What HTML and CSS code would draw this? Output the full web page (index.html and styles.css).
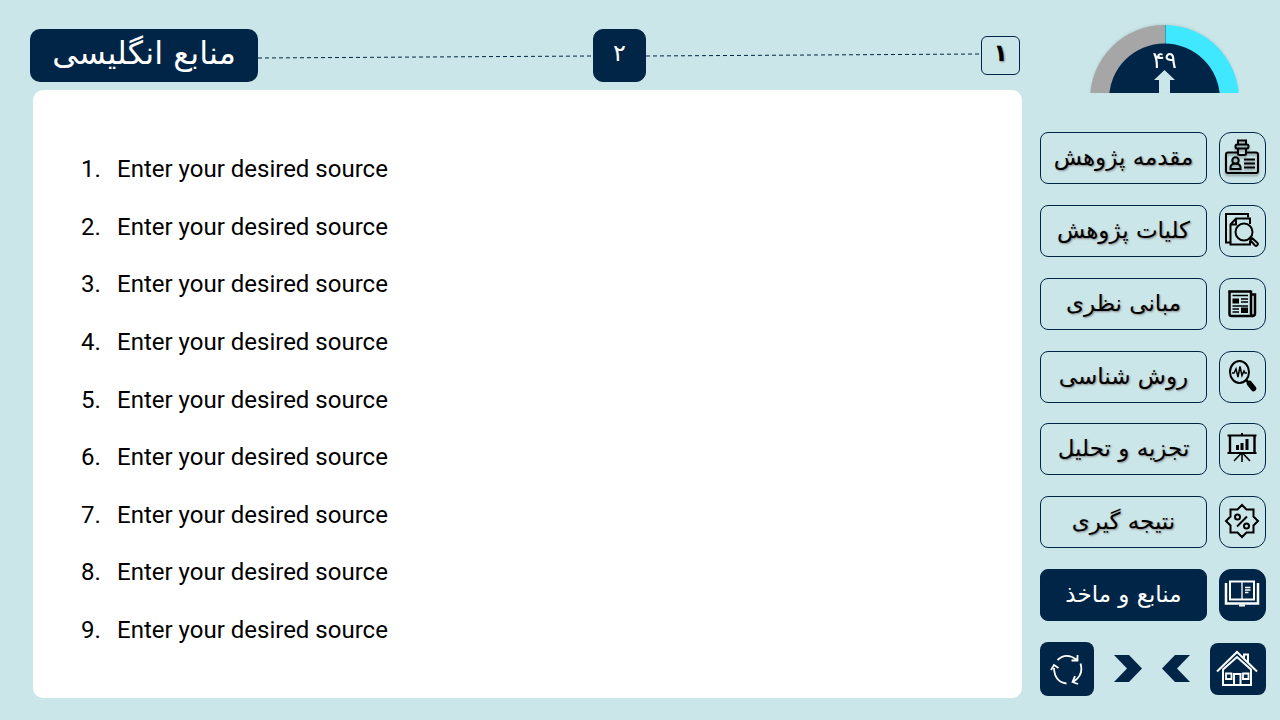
FILE: index.html
```
<!DOCTYPE html>
<html lang="fa">
<head>
    <meta charset="UTF-8">
    <meta name="viewport" content="width=device-width, initial-scale=1">
    <title>منابع و ماخذ</title>
    <link rel="stylesheet" href="styles.css">
</head>
<body>
    <main class="content">
        <header class="steps">
            <h1 class="title" dir="rtl">منابع انگلیسی</h1>
            <svg class="step-line" viewBox="0 0 335 8" preserveAspectRatio="none" aria-hidden="true">
                <path d="M0 6 L335 4"/>
            </svg>
            <button type="button" class="step step-active">۲</button>
            <svg class="step-line" viewBox="0 0 335 8" preserveAspectRatio="none" aria-hidden="true">
                <path d="M0 4 L335 2"/>
            </svg>
            <button type="button" class="step">۱</button>
        </header>

        <section class="card">
            <ol class="sources" lang="en">
                <li>Enter your desired source</li>
                <li>Enter your desired source</li>
                <li>Enter your desired source</li>
                <li>Enter your desired source</li>
                <li>Enter your desired source</li>
                <li>Enter your desired source</li>
                <li>Enter your desired source</li>
                <li>Enter your desired source</li>
                <li>Enter your desired source</li>
            </ol>
        </section>
    </main>

    <aside class="sidebar">
        <div class="gauge">
            <svg width="149" height="69" viewBox="0 0 149 69" aria-hidden="true">
                <path d="M0 75 A74.5 74.5 0 0 1 75 1 V75 Z" fill="#a6a6a6"/>
                <path d="M75 1 A74.5 74.5 0 0 1 149 75 H75 Z" fill="#40e8ff"/>
                <path d="M75.5 1 V20" stroke="#2aa5b8" stroke-width="1"/>
                <circle cx="74.5" cy="75" r="55.5" fill="#002546"/>
                <path d="M74.5 46 L85 56 H80 V69 H69 V56 H64 Z" fill="#cbe6e9"/>
            </svg>
            <span class="gauge-value">۴۹</span>
        </div>

        <nav class="menu">
            <a href="#intro" class="menu-item">
                <span class="menu-label" dir="rtl">مقدمه پژوهش</span>
                <span class="menu-icon">
                    <svg class="icon-shadow" width="36" height="36" viewBox="0 0 36 36" fill="none" stroke="#000" stroke-width="2">
                        <path d="M13 13.5 H4 Q2 13.5 2 15.5 V32 Q2 34 4 34 H32 Q34 34 34 32 V15.5 Q34 13.5 32 13.5 H23"/>
                        <path d="M14 1.5 H22 V5.5 H14 Z M13 5.5 H23 Q24.5 5.5 24.5 7.5 Q24.5 9.5 23 9.5 H13 Q11.5 9.5 11.5 7.5 Q11.5 5.5 13 5.5 Z M14 9.5 V14.5 Q14 16 15.5 16 H20.5 Q22 16 22 14.5 V9.5"/>
                        <circle cx="11.5" cy="21.5" r="3.2"/>
                        <path d="M6.5 30 V28 Q7 25.5 10 24.5 H13 Q16 25.5 16.5 28 V30 Z"/>
                        <path d="M20 20.5 H31 M20 24.5 H31 M20 28.5 H31"/>
                    </svg>
                </span>
            </a>
            <a href="#overview" class="menu-item">
                <span class="menu-label" dir="rtl">کلیات پژوهش</span>
                <span class="menu-icon">
                    <svg width="36" height="36" viewBox="0 0 36 36" fill="none" stroke="#000" stroke-width="2">
                        <path d="M6 30.5 H2 V2 H24 V5.5"/>
                        <path d="M26 12 V6.5 H12 L6.5 12.5 V32.500 H26 V29"/>
                        <path d="M12 6.5 V12.5 H6.5"/>
                        <circle cx="20" cy="20" r="8.5"/>
                        <path d="M25 27 L27 25 M26.5 28.5 L31 33.5 Q32.5 34.5 33.5 33 Q34.5 32 33.5 31 L28.5 26.5 Z"/>
                    </svg>
                </span>
            </a>
            <a href="#theory" class="menu-item">
                <span class="menu-label" dir="rtl">مبانی نظری</span>
                <span class="menu-icon">
                    <svg width="36" height="36" viewBox="0 0 36 36" fill="none" stroke="#000" stroke-width="2">
                        <path d="M27 6.5 H5.5 V29 Q5.500 31 7.5 31 H28 Q31 31 31 28.5 V9.5 H27.5" stroke-width="2.5"/>
                        <path d="M27 5.5 V29 Q27 31 29 31" stroke-width="2.5"/>
                        <path d="M8.5 10.5 H24 M17 14 H24 M17 17 H24 M8.5 21 H24 M8.5 24 H15 M8.5 27 H15" stroke-width="1.3"/>
                        <path d="M8.5 13.5 H15 V18.5 H8.5 Z M17 22.500 H24 V28 H17 Z" fill="#000" stroke="none"/>
                    </svg>
                </span>
            </a>
            <a href="#method" class="menu-item">
                <span class="menu-label" dir="rtl">روش شناسی</span>
                <span class="menu-icon">
                    <svg width="36" height="36" viewBox="0 0 36 36" fill="none" stroke="#000" stroke-width="2">
                        <ellipse cx="15.5" cy="14" rx="9.5" ry="11"/>
                        <path d="M8 15 H10 L12 11 L14 19 L16 8.5 L18 17.5 L20 13 L21 15 H23" stroke-width="1.5"/>
                        <path d="M22 22 L25 25" stroke-width="2.5"/>
                        <path d="M25.5 25.5 L29.5 30.5" stroke-width="5.5" stroke-linecap="round"/>
                    </svg>
                </span>
            </a>
            <a href="#analysis" class="menu-item">
                <span class="menu-label" dir="rtl">تجزیه و تحلیل</span>
                <span class="menu-icon">
                    <svg width="36" height="36" viewBox="0 0 36 36" fill="none" stroke="#000" stroke-width="2">
                        <path d="M3.5 5.5 H32.5 M3.5 23 H32.5 M18 3 V5" stroke-width="2"/>
                        <path d="M6 6 V22.5 M30.5 6 V22.5" stroke-width="2.4"/>
                        <path d="M12 15 H15 V20 H12 Z M16.5 13 H19.5 V20 H16.5 Z M21.5 9 H24.5 V20 H21.5 Z" fill="#000" stroke="none"/>
                        <path d="M18 23 V32 M17 23.5 L10 31 M19 23.5 L26 31" stroke-width="1.6"/>
                    </svg>
                </span>
            </a>
            <a href="#results" class="menu-item">
                <span class="menu-label" dir="rtl">نتیجه گیری</span>
                <span class="menu-icon">
                    <svg width="36" height="36" viewBox="0 0 36 36" fill="none" stroke="#000" stroke-width="2">
                        <path d="M18 2 L22.5 6.5 H29.5 V13.5 L34 18 L29.5 22.5 V29.5 H22.5 L18 34 L13.5 29.5 H6.5 V22.5 L2 18 L6.5 13.5 V6.5 H13.5 Z"/>
                        <circle cx="13.5" cy="14" r="2.5"/>
                        <circle cx="22.5" cy="23" r="2.5"/>
                        <path d="M23 13.5 L13 23.5"/>
                    </svg>
                </span>
            </a>
            <a href="#sources" class="menu-item menu-item-active" aria-current="page">
                <span class="menu-label" dir="rtl">منابع و ماخذ</span>
                <span class="menu-icon">
                    <svg width="36" height="36" viewBox="0 0 36 36" fill="none" stroke="#fff" stroke-width="2">
                        <path d="M2 7 V27.5 H34 V7" stroke-width="2.5"/>
                        <path d="M6 5.5 H30 V23.5 H6 Z"/>
                        <path d="M18 5.5 V23.5 M21 11.5 H26.5 M21 14 H26.5 M21 16.5 H24.5" stroke-width="1.3"/>
                        <path d="M15 29.5 H21"/>
                    </svg>
                </span>
            </a>

            <div class="controls">
                <button type="button" class="control" aria-label="Reload">
                    <svg width="36" height="36" viewBox="0 0 36 36" fill="none" stroke="#fff" stroke-width="1.8">
                        <path d="M8.5 9 Q17 1 27.5 8.5 M22.5 9.5 H28.5 V4"/>
                        <path d="M31.5 12.5 Q35 24 24.5 30.5 M26 25 L23.5 31 L29 33"/>
                        <path d="M17.5 32.5 Q5.5 31 5 17 M2 19 L5 14 L9.5 17"/>
                    </svg>
                </button>
                <button type="button" class="arrow" aria-label="Next">
                    <svg width="28" height="27" viewBox="0 0 28 27"><path d="M0 0 H15 L28 13.5 L15 27 H0 L13 13.5 Z" fill="#002546"/></svg>
                </button>
                <button type="button" class="arrow" aria-label="Previous">
                    <svg width="28" height="27" viewBox="0 0 28 27"><path d="M28 0 H13 L0 13.5 L13 27 H28 L15 13.5 Z" fill="#002546"/></svg>
                </button>
                <button type="button" class="control control-home" aria-label="Home">
                    <svg width="44" height="38" viewBox="0 0 44 38" fill="none" stroke="#fff" stroke-width="2">
                        <path d="M1 21.500 L21 2 L41 21.5"/>
                        <path d="M7 19.5 V35 H35 V19.5 L21 7 Z"/>
                        <path d="M28 8 V4.5 H32 V13"/>
                        <path d="M18 35 V24 H24.5 V35"/>
                        <path d="M10 23.5 H15.5 V29 H10 Z M27 23.5 H32.5 V29 H27 Z" stroke-width="1.8"/>
                    </svg>
                </button>
            </div>
        </nav>
    </aside>
</body>
</html>
```
FILE: styles.css
```
* {
    box-sizing: border-box;
}
body {
    margin: 0;
    min-height: 100vh;
    display: flex;
    gap: 18px;
    padding: 24px 14px 22px 30px;
    background-color: #cbe6e9;
    color: #000;
    font-family: "DejaVu Sans", sans-serif;
}
button {
    padding: 0;
    border: none;
    background: none;
    color: inherit;
    font-family: inherit;
    cursor: pointer;
}
svg {
    display: block;
}

/* main column */
.content {
    flex: 1;
    min-width: 0;
    display: flex;
    flex-direction: column;
    gap: 8px;
    padding-top: 5px;
}
.steps {
    display: flex;
    align-items: center;
    padding-right: 2px;
}
.title {
    width: 228px;
    height: 53px;
    margin: 0;
    border-radius: 10px;
    background-color: #002546;
    color: #fff;
    font-size: 32px;
    font-weight: normal;
    line-height: 48px;
    text-align: center;
}
.step-line {
    flex: 1;
    min-width: 0;
    height: 8px;
    fill: none;
    stroke: #002546;
    stroke-width: 1;
    stroke-dasharray: 4 3;
}
.step {
    width: 39px;
    height: 39px;
    padding-bottom: 6px;
    border: 1px solid #002546;
    border-radius: 6px;
    font-size: 24px;
    font-weight: bold;
    line-height: 30px;
    text-shadow: 1px 1px 2px #888;
}
.step-active {
    width: 53px;
    height: 53px;
    border-radius: 10px;
    background-color: #002546;
    color: #fff;
    font-weight: normal;
    text-shadow: none;
}
.card {
    flex: 1;
    display: flex;
    margin-left: 3px;
    padding: 65px 48px 54px;
    border-radius: 10px;
    background-color: #fff;
}
.sources {
    flex: 1;
    display: flex;
    flex-direction: column;
    justify-content: space-between;
    margin: 0;
    padding: 0;
    list-style: none;
    counter-reset: source;
    font-family: Roboto, sans-serif;
    font-size: 24px;
    line-height: 28px;
}
.sources li {
    display: flex;
    counter-increment: source;
}
.sources li::before {
    content: counter(source) ".";
    width: 36px;
}

/* sidebar */
.sidebar {
    width: 226px;
    display: flex;
    flex-direction: column;
    gap: 39px;
    padding-bottom: 2px;
}
.gauge {
    position: relative;
    width: 149px;
    margin-left: 50px;
    filter: drop-shadow(0 -1px 1px #b4cfd3);
}
.gauge-value {
    position: absolute;
    top: 24px;
    left: 0;
    width: 100%;
    color: #fff;
    font-size: 23px;
    line-height: 24px;
    text-align: center;
}
.menu {
    flex: 1;
    display: flex;
    flex-direction: column;
    justify-content: space-between;
}
.menu-item {
    display: flex;
    gap: 12px;
    color: #000;
    text-decoration: none;
    text-shadow: 1px 1px 2px #888;
}
.menu-label {
    flex: 1;
    height: 52px;
    border: 1px solid #002546;
    border-radius: 8px;
    font-size: 23px;
    line-height: 48px;
    text-align: center;
    white-space: nowrap;
}
.menu-icon {
    width: 47px;
    height: 52px;
    display: flex;
    align-items: center;
    justify-content: center;
    padding: 0 1px 2px 0;
    border: 1px solid #002546;
    border-radius: 12px;
}
.icon-shadow {
    filter: drop-shadow(0 2px 1px #8a9c9e);
}
.menu-item-active {
    color: #fff;
    text-shadow: none;
}
.menu-item-active .menu-label,
.menu-item-active .menu-icon {
    background-color: #002546;
}
.controls {
    display: flex;
    align-items: center;
    justify-content: space-between;
}
.control {
    width: 54px;
    height: 54px;
    display: flex;
    align-items: center;
    justify-content: center;
    border-radius: 8px;
    background-color: #002546;
}
.control-home {
    width: 56px;
    height: 52px;
}
```
